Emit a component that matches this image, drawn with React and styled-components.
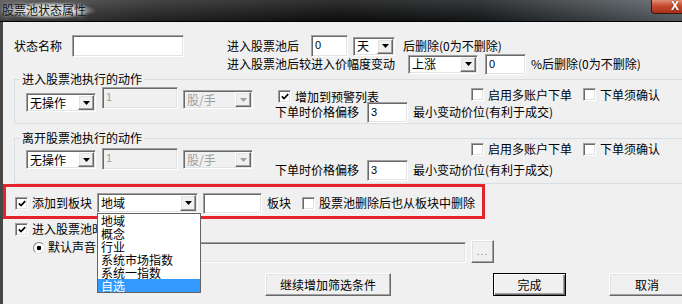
import React from 'react';
import styled, { createGlobalStyle, css } from 'styled-components';

const GlobalStyle = createGlobalStyle`
  html, body {
    margin: 0;
    padding: 0;
    background: #f0f0f0;
    overflow: hidden;
  }
  body {
    font-family: "Noto Sans CJK SC", "Liberation Sans", sans-serif;
    font-size: 12px;
    color: #000;
  }
`;

const sunken = css`
  box-sizing: border-box;
  border: 1px solid;
  border-color: #a0a0a0 #ffffff #ffffff #a0a0a0;
  box-shadow: inset 1px 1px 0 #696969, inset -1px -1px 0 #e3e3e3;
`;

const raised = css`
  box-sizing: border-box;
  border: 1px solid;
  border-color: #ffffff #696969 #696969 #ffffff;
  box-shadow: inset -1px -1px 0 #a0a0a0, inset 1px 1px 0 #e3e3e3;
`;

const ArrowIcon = ({ disabled }) => (
  <svg width="7" height="4" viewBox="0 0 7 4">
    <polygon points="0,0 7,0 3.5,4" fill={disabled ? '#a0a0a0' : '#000'} />
  </svg>
);

const Combo = ({ value, disabled, children, ...rest }) => (
  <ComboBox $disabled={disabled} {...rest}>
    <span>{value}</span>
    <ArrowBtn>
      <ArrowIcon disabled={disabled} />
    </ArrowBtn>
    {children}
  </ComboBox>
);

const CheckItem = ({ checked, children, ...rest }) => (
  <CheckLabel {...rest}>
    <CheckBox>
      {checked && (
        <svg width="8" height="7" viewBox="0 0 8 7">
          <path d="M0.8 3.4 L3 5.6 L7.2 1.2" fill="none" stroke="#000" strokeWidth="1.7" />
        </svg>
      )}
    </CheckBox>
    <span>{children}</span>
  </CheckLabel>
);

const Group = ({ legend, mt, pb, children }) => (
  <GroupBox $mt={mt} $pb={pb}>
    <Legend>{legend}</Legend>
    <GroupInner>{children}</GroupInner>
  </GroupBox>
);

const listItems = ['地域', '概念', '行业', '系统市场指数', '系统一指数', '自选'];

const ActionGroup = ({ legend, mt, pb, leftTops, rowATop, rowBTop, withAlert }) => (
  <Group legend={legend} mt={mt} pb={pb}>
    <LeftBlock>
      <Combo value="无操作" $w={70} $mt={leftTops[0]} />
      <TextInput $w={76} $h={22} $mt={leftTops[1]} $ml={6} $disabled>1</TextInput>
      <Combo value="股/手" disabled $w={70} $mt={leftTops[2]} $ml={5} />
    </LeftBlock>
    <RightBlock>
      <OptionRow $mt={rowATop}>
        <span>{withAlert && <CheckItem checked $ml={3}>增加到预警列表</CheckItem>}</span>
        <CheckItem>启用多账户下单</CheckItem>
        <CheckItem>下单须确认</CheckItem>
      </OptionRow>
      <OffsetRow $mt={rowBTop}>
        <Label $w={92}>下单时价格偏移</Label>
        <TextInput $w={41} $h={21}>3</TextInput>
        <Label $ml={5}>最小变动价位(有利于成交)</Label>
      </OffsetRow>
    </RightBlock>
  </Group>
);

export default function App() {
  return (
    <>
      <GlobalStyle />
      <Window>
        <TitleBar>
          <Title>股票池状态属性</Title>
          <CloseButton>X</CloseButton>
        </TitleBar>
        <Body>
          <TopSection>
            <NameField>
              <Label>状态名称</Label>
              <TextInput $w={112} $h={22} />
            </NameField>
            <RuleColumn>
              <RuleRow>
                <Label $w={84}>进入股票池后</Label>
                <TextInput $w={37} $h={22}>0</TextInput>
                <Combo value="天" $w={42} $ml={5} />
                <Label $ml={8}>后删除(0为不删除)</Label>
              </RuleRow>
              <RuleRow>
                <Label $w={181}>进入股票池后较进入价幅度变动</Label>
                <Combo value="上涨" $w={70} />
                <TextInput $w={41} $h={21} $ml={7}>0</TextInput>
                <Label $ml={5}>%后删除(0为不删除)</Label>
              </RuleRow>
            </RuleColumn>
          </TopSection>

          <ActionGroup
            legend="进入股票池执行的动作"
            mt={-1}
            pb={0}
            leftTops={[7, 1, 4]}
            rowATop={0}
            rowBTop={3}
            withAlert
          />
          <ActionGroup
            legend="离开股票池执行的动作"
            mt={7}
            pb={2}
            leftTops={[5, 3, 5]}
            rowATop={-3}
            rowBTop={5}
          />

          <Highlight>
            <CheckItem checked>添加到板块</CheckItem>
            <Combo value="地域" $w={101} $h={20} $ml={5}>
              <DropList>
                {listItems.map((item) => (
                  <DropItem key={item} $active={item === '自选'}>{item}</DropItem>
                ))}
              </DropList>
            </Combo>
            <TextInput $w={59} $h={21} $ml={5} />
            <Label $ml={5}>板块</Label>
            <CheckItem $ml={11}>股票池删除后也从板块中删除</CheckItem>
          </Highlight>

          <SoundRow>
            <CheckItem checked $ml={1}>进入股票池时</CheckItem>
          </SoundRow>

          <PathRow>
            <Radio />
            <Label $w={112} $ml={3}>默认声音</Label>
            <TextInput $w={306} $h={21} $mt={2} $disabled />
            <BrowseButton>...</BrowseButton>
          </PathRow>

          <ButtonRow>
            <PushButton $w={126}>继续增加筛选条件</PushButton>
            <PushButton $w={73} $ml={102} $default>完成</PushButton>
            <PushButton $w={76} $ml={43}>取消</PushButton>
          </ButtonRow>
        </Body>
      </Window>
    </>
  );
}

const Window = styled.div`
  position: relative;
  width: 682px;
  height: 304px;
  overflow: hidden;
  background: #f0f0f0;
  font-family: "Noto Sans CJK SC", "Liberation Sans", sans-serif;
  font-size: 12px;
`;

const TitleBar = styled.div`
  height: 21px;
  border-bottom: 1px solid #000;
  display: flex;
  align-items: flex-start;
  background:
    linear-gradient(to bottom, rgba(255, 255, 255, 0.14), rgba(0, 0, 0, 0.12)),
    linear-gradient(to right, #4a4a4a 0%, #262626 22%, #0e0e0e 50%, #16191b 70%, #454b4f 90%, #5b6266 100%);
`;

const Title = styled.span`
  margin: 2px 0 0 0;
  padding: 1px 10px 2px 2px;
  line-height: 14px;
  color: #141414;
  white-space: nowrap;
  background: radial-gradient(ellipse closest-side, rgba(215, 215, 215, 0.95) 55%, rgba(215, 215, 215, 0) 100%);
  text-shadow: 0 0 4px rgba(255, 255, 255, 0.8);
`;

const CloseButton = styled.span`
  margin-left: auto;
  margin-right: -14px;
  width: 45px;
  height: 14px;
  box-sizing: border-box;
  border: 1px solid #3b1710;
  border-top: none;
  border-radius: 0 0 0 4px;
  background: linear-gradient(to bottom, #e0907a 0%, #c84a2e 45%, #a8301a 100%);
  color: #fff;
  font-family: "Liberation Sans", sans-serif;
  font-weight: bold;
  font-size: 12px;
  line-height: 13px;
  padding-left: 19px;
  text-shadow: 0 0 2px #5a1206;
`;

const Body = styled.div`
  display: flex;
  flex-direction: column;
  height: 282px;
  box-sizing: border-box;
  border-left: 3px solid #474747;
  padding-left: 11px;
`;

const Label = styled.span`
  white-space: nowrap;
  line-height: 14px;
  flex: none;
  width: ${(p) => (p.$w ? `${p.$w}px` : 'auto')};
  margin-left: ${(p) => p.$ml || 0}px;
`;

const TextInput = styled.div`
  ${sunken};
  flex: none;
  width: ${(p) => p.$w}px;
  height: ${(p) => p.$h}px;
  margin: ${(p) => p.$mt || 0}px 0 0 ${(p) => p.$ml || 0}px;
  padding: 3px 3px 0;
  background: ${(p) => (p.$disabled ? '#f0f0f0' : '#fff')};
  color: ${(p) => (p.$disabled ? '#a0a0a0' : '#000')};
  font-family: "Liberation Sans", sans-serif;
  font-size: 11px;
  line-height: 12px;
`;

const ComboBox = styled.div`
  ${sunken};
  position: relative;
  flex: none;
  width: ${(p) => p.$w}px;
  height: ${(p) => p.$h || 19}px;
  margin: ${(p) => p.$mt || 0}px 0 0 ${(p) => p.$ml || 0}px;
  padding: 1px 1px 1px 3px;
  display: flex;
  align-items: center;
  justify-content: space-between;
  background: ${(p) => (p.$disabled ? '#f0f0f0' : '#fff')};
  color: ${(p) => (p.$disabled ? '#a0a0a0' : '#000')};
  line-height: 14px;
  white-space: nowrap;
`;

const ArrowBtn = styled.span`
  ${raised};
  width: 16px;
  align-self: stretch;
  display: flex;
  align-items: center;
  justify-content: center;
  background: #f0f0f0;
`;

const CheckLabel = styled.label`
  display: inline-flex;
  align-items: center;
  gap: 4px;
  margin-left: ${(p) => p.$ml || 0}px;
  white-space: nowrap;
  line-height: 14px;
`;

const CheckBox = styled.span`
  ${sunken};
  width: 13px;
  height: 13px;
  flex: none;
  background: #fff;
  display: inline-flex;
  align-items: center;
  justify-content: center;
`;

const Radio = styled.span`
  width: 12px;
  height: 12px;
  margin: 2px 0 0 19px;
  box-sizing: border-box;
  flex: none;
  border-radius: 50%;
  border: 1px solid;
  border-color: #808080 #e3e3e3 #e3e3e3 #808080;
  background: radial-gradient(circle, #000 0 2px, #fff 2.6px);
`;

const TopSection = styled.div`
  display: flex;
  padding-top: 15px;
`;

const NameField = styled.div`
  width: 213px;
  height: 18px;
  flex: none;
  display: flex;
  align-items: center;
  gap: 10px;
`;

const RuleColumn = styled.div`
  display: flex;
  flex-direction: column;
`;

const RuleRow = styled.div`
  height: 18px;
  display: flex;
  align-items: center;
`;

const GroupBox = styled.fieldset`
  margin: ${(p) => p.$mt}px -40px 0 0;
  padding: 0 0 ${(p) => p.$pb}px 0;
  border: 1px solid #d5dfe5;
  min-width: 0;
`;

const Legend = styled.legend`
  margin-left: 5px;
  padding: 0 2px;
  line-height: 14px;
`;

const GroupInner = styled.div`
  display: flex;
  align-items: flex-start;
  padding-left: 11px;
`;

const LeftBlock = styled.div`
  width: 249px;
  flex: none;
  display: flex;
  align-items: flex-start;
`;

const RightBlock = styled.div`
  display: flex;
  flex-direction: column;
`;

const OptionRow = styled.div`
  display: grid;
  grid-template-columns: 196px 112px auto;
  align-items: center;
  height: 12px;
  margin-top: ${(p) => p.$mt}px;
`;

const OffsetRow = styled.div`
  display: flex;
  align-items: center;
  height: 22px;
  margin-top: ${(p) => p.$mt}px;
`;

const Highlight = styled.div`
  align-self: flex-start;
  width: 482px;
  height: 35px;
  margin-left: -11px;
  box-sizing: border-box;
  border: 3px solid #e5232b;
  padding: 3px 0 0 9px;
  display: flex;
  align-items: center;
`;

const DropList = styled.div`
  position: absolute;
  top: calc(100% + 1px);
  left: -1px;
  z-index: 5;
  width: 104px;
  box-sizing: border-box;
  border: 1px solid #646464;
  background: #fff;
  color: #000;
`;

const DropItem = styled.div`
  height: 13px;
  line-height: 13px;
  padding-left: 3px;
  background: ${(p) => (p.$active ? '#3399ff' : 'transparent')};
  color: ${(p) => (p.$active ? '#fff' : '#000')};
`;

const SoundRow = styled.div`
  display: flex;
  align-items: center;
  height: 14px;
  margin-top: 3px;
`;

const PathRow = styled.div`
  display: flex;
  align-items: flex-start;
  height: 23px;
  margin-top: 4px;
`;

const BrowseButton = styled.span`
  ${raised};
  width: 23px;
  height: 23px;
  margin-left: 5px;
  flex: none;
  display: flex;
  align-items: center;
  justify-content: center;
  color: #8a8a8a;
  font-family: "Liberation Sans", sans-serif;
  font-size: 10px;
  letter-spacing: 1px;
  background: #f0f0f0;
`;

const ButtonRow = styled.div`
  display: flex;
  margin-top: 10px;
  padding-left: 251px;
`;

const PushButton = styled.span`
  ${raised};
  flex: none;
  width: ${(p) => p.$w}px;
  height: 23px;
  margin-left: ${(p) => p.$ml || 0}px;
  display: flex;
  align-items: center;
  justify-content: center;
  background: #f0f0f0;
  line-height: 14px;
  ${(p) =>
    p.$default &&
    css`
      border: 1px solid #000;
      box-shadow: inset 1px 1px 0 #fff, inset -1px -1px 0 #696969, inset -2px -2px 0 #a0a0a0;
    `}
`;
